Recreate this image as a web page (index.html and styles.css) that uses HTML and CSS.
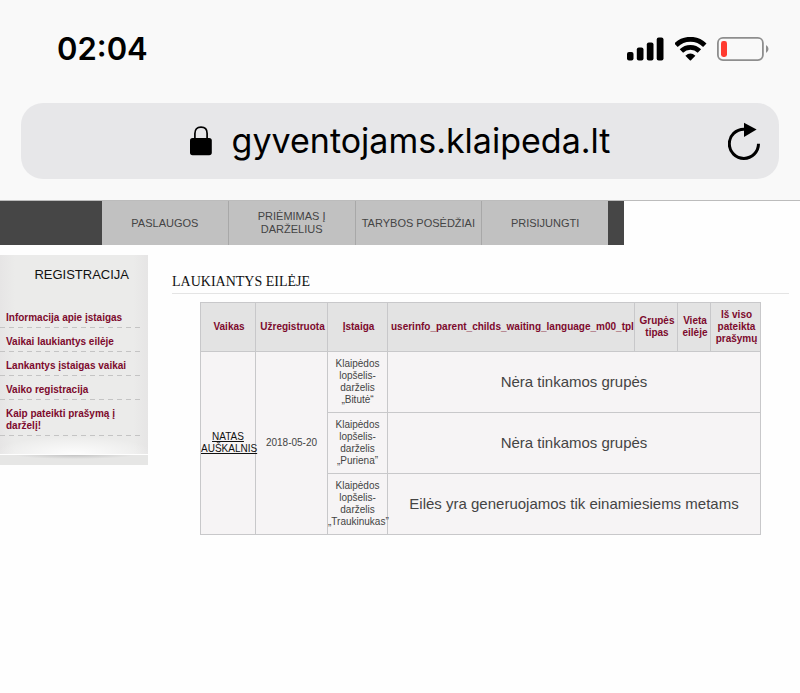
FILE: index.html
```html
<!DOCTYPE html>
<html lang="lt">
<head>
    <meta charset="UTF-8">
    <meta name="viewport" content="width=device-width, initial-scale=1.0">
    <title>Laukiantys eilėje</title>
    <link rel="stylesheet" href="styles.css">
</head>
<body>
    <header class="browser">
        <div class="status-bar">
            <span class="time">02:04</span>
            <div class="status-icons">
                <svg width="38" height="24" viewBox="0 0 38 24" aria-hidden="true">
                    <rect x="0" y="15" width="6.5" height="8.5" rx="2"/>
                    <rect x="9.8" y="10.5" width="6.7" height="13" rx="2"/>
                    <rect x="19.8" y="5.5" width="6.7" height="18" rx="2"/>
                    <rect x="29.7" y="0.5" width="6.8" height="23" rx="2"/>
                </svg>
                <svg width="32" height="24" viewBox="0 0 32 24" aria-hidden="true">
                    <path d="M1 8.2 A20.4 20.4 0 0 1 29.8 8.2" fill="none" stroke="#000" stroke-width="4.8"/>
                    <path d="M6.4 14 A12.8 12.8 0 0 1 24.4 14" fill="none" stroke="#000" stroke-width="4.8"/>
                    <path d="M10.4 18.8 Q15.4 14.4 20.4 18.8 L16 23.2 Q15.4 23.7 14.8 23.2 Z"/>
                </svg>
                <svg width="52" height="24" viewBox="0 0 52 24" aria-hidden="true">
                    <rect x="0.9" y="0.9" width="45" height="22.2" rx="5" fill="none" stroke="#8e8e8e" stroke-width="1.8"/>
                    <rect x="4" y="4" width="6" height="16" rx="2.4" fill="#ff3b30"/>
                    <path d="M49 8 Q51.5 9.5 51.5 12 Q51.5 14.5 49 16 Z" fill="#8e8e8e"/>
                </svg>
            </div>
        </div>
        <div class="address-bar">
            <div class="address">
                <svg width="22" height="30" viewBox="0 0 22 30" aria-hidden="true">
                    <path d="M4.9 13 V7.5 Q4.9 1.2 11 1.2 Q17.1 1.2 17.1 7.5 V13" fill="none" stroke="#000" stroke-width="1.7"/>
                    <rect x="0" y="12" width="21.8" height="17.2" rx="2.6"/>
                </svg>
                <span>gyventojams.klaipeda.lt</span>
            </div>
            <button class="reload" type="button" aria-label="Reload">
                <svg width="32" height="38" viewBox="0 0 32 38" aria-hidden="true">
                    <path d="M16 7.2 A14.6 14.6 0 1 0 30.5 21.8" fill="none" stroke="#000" stroke-width="3"/>
                    <path d="M16 0.8 L28.6 7.6 L16 15 Z"/>
                </svg>
            </button>
        </div>
    </header>

    <nav class="menu">
        <a href="#">PASLAUGOS</a>
        <a href="#">PRIĖMIMAS Į DARŽELIUS</a>
        <a href="#">TARYBOS POSĖDŽIAI</a>
        <a href="#">PRISIJUNGTI</a>
    </nav>

    <div class="page">
        <aside class="sidebar">
            <div class="panel">
                <h2>REGISTRACIJA</h2>
                <ul>
                    <li><a href="#">Informacija apie įstaigas</a></li>
                    <li><a href="#">Vaikai laukiantys eilėje</a></li>
                    <li><a href="#">Lankantys įstaigas vaikai</a></li>
                    <li><a href="#">Vaiko registracija</a></li>
                    <li><a href="#">Kaip pateikti prašymą į darželį!</a></li>
                </ul>
            </div>
            <div class="panel-foot"></div>
        </aside>

        <main class="content">
            <h1>LAUKIANTYS EILĖJE</h1>
            <table class="queue">
                <colgroup>
                    <col class="col-child">
                    <col class="col-date">
                    <col class="col-place">
                    <col class="col-language">
                    <col class="col-group">
                    <col class="col-position">
                    <col class="col-total">
                </colgroup>
                <thead>
                    <tr>
                        <th>Vaikas</th>
                        <th>Užregistruota</th>
                        <th>Įstaiga</th>
                        <th>userinfo_parent_childs_waiting_language_m00_tpl</th>
                        <th>Grupės tipas</th>
                        <th>Vieta eilėje</th>
                        <th>Iš viso pateikta prašymų</th>
                    </tr>
                </thead>
                <tbody>
                    <tr>
                        <td rowspan="3"><a href="#">NATAS AUŠKALNIS</a></td>
                        <td rowspan="3">2018-05-20</td>
                        <td>Klaipėdos lopšelis-darželis „Bitutė“</td>
                        <td colspan="4" class="message">Nėra tinkamos grupės</td>
                    </tr>
                    <tr>
                        <td>Klaipėdos lopšelis-darželis „Puriena”</td>
                        <td colspan="4" class="message">Nėra tinkamos grupės</td>
                    </tr>
                    <tr>
                        <td>Klaipėdos lopšelis-darželis „Traukinukas”</td>
                        <td colspan="4" class="message">Eilės yra generuojamos tik einamiesiems metams</td>
                    </tr>
                </tbody>
            </table>
        </main>
    </div>
</body>
</html>
```
FILE: styles.css
```css
* {
    box-sizing: border-box;
}
body {
    margin: 0;
    background: #fefefe;
    color: #444;
    font-family: "Liberation Sans", Arial, sans-serif;
    font-size: 10px;
    line-height: 12px;
}

/* Browser bar */
.browser {
    padding: 32px 21px 21px;
    background: #f9f9f9;
    border-bottom: 1px solid #bcbcbc;
    color: #000;
    font-family: Inter, sans-serif;
}
.status-bar {
    display: flex;
    align-items: center;
    justify-content: space-between;
    height: 34px;
    margin-bottom: 37px;
    padding: 0 10px 0 36px;
}
.time {
    font-size: 31px;
    font-weight: 600;
    line-height: 36px;
}
.status-icons {
    display: flex;
    gap: 10px;
}
.address-bar {
    display: flex;
    align-items: center;
    height: 76px;
    padding: 0 19px 0 51px;
    background: #e7e7e9;
    border-radius: 22px;
}
.address {
    display: flex;
    flex: 1;
    align-items: center;
    justify-content: center;
    gap: 20px;
    font-size: 34px;
    line-height: 44px;
}
.reload {
    padding: 0;
    border: 0;
    background: none;
    line-height: 0;
    cursor: pointer;
}

/* Top menu */
.menu {
    display: flex;
    width: 78%;
    padding: 0 16px 0 102px;
    background: #464646;
}
.menu a {
    display: flex;
    flex: 1 1 0;
    align-items: center;
    justify-content: center;
    min-height: 44px;
    padding: 0 6px;
    background: #c1c1c1;
    border-right: 1px solid #a8a8a8;
    color: #444;
    font-size: 11px;
    line-height: 13px;
    text-align: center;
    text-decoration: none;
}
.menu a:last-child {
    border-right: 0;
}

.page {
    display: flex;
    gap: 24px;
    padding: 10px 11px 0 0;
}

/* Sidebar */
.sidebar {
    flex: 0 0 148px;
}
.panel {
    padding: 12px 8px 18px 0;
    background:
        radial-gradient(ellipse 80px 18px at 50% 100%, #fdfdfd, rgba(253, 253, 253, 0)),
        linear-gradient(to right, #e6e5e5, #ebebea 10%, #ebebea 90%, #e6e5e5);
}
.panel h2 {
    margin: 0 11px 21px 0;
    color: #111;
    font-size: 13px;
    font-weight: normal;
    line-height: 16px;
    text-align: right;
}
.panel ul {
    margin: 0;
    padding: 0;
    list-style: none;
}
.panel li {
    padding: 8px 6px 4px;
    background: repeating-linear-gradient(to right, #c4c4c4 0, #c4c4c4 5px, transparent 5px, transparent 9px) bottom / 100% 1px no-repeat;
}
.panel a {
    color: #7d0a2d;
    font-weight: bold;
    text-decoration: none;
}
.panel-foot {
    height: 10px;
    margin-top: 1px;
    background: radial-gradient(ellipse 60px 4px at 50% 0, #c4c4c4, #e6e6e5);
}

/* Waiting list */
.content {
    flex: 1;
    min-width: 0;
}
.content h1 {
    margin: 0 0 8px;
    padding: 18px 0 3px;
    border-bottom: 1px solid #e4e4e4;
    color: #111;
    font-family: Georgia, "Liberation Serif", serif;
    font-size: 14px;
    font-weight: normal;
    line-height: 17px;
}
.queue {
    width: 561px;
    margin-left: 28px;
    border-collapse: collapse;
    table-layout: fixed;
}
.queue th,
.queue td {
    border: 1px solid #c8c8ca;
    text-align: center;
    vertical-align: middle;
}
.queue th {
    padding: 6px 1px 6px 3px;
    background: #e3e3e3;
    color: #7d0a2d;
}
.queue td {
    padding: 6px 0;
    background: #f6f4f5;
}
.queue a {
    color: #111;
}
.queue .message {
    font-size: 15px;
    line-height: 18px;
}
.col-child {
    width: 55px;
}
.col-date {
    width: 72px;
}
.col-place {
    width: 60px;
}
.col-language {
    width: 247px;
}
.col-group {
    width: 43px;
}
.col-position {
    width: 33px;
}
.col-total {
    width: 50px;
}
```
